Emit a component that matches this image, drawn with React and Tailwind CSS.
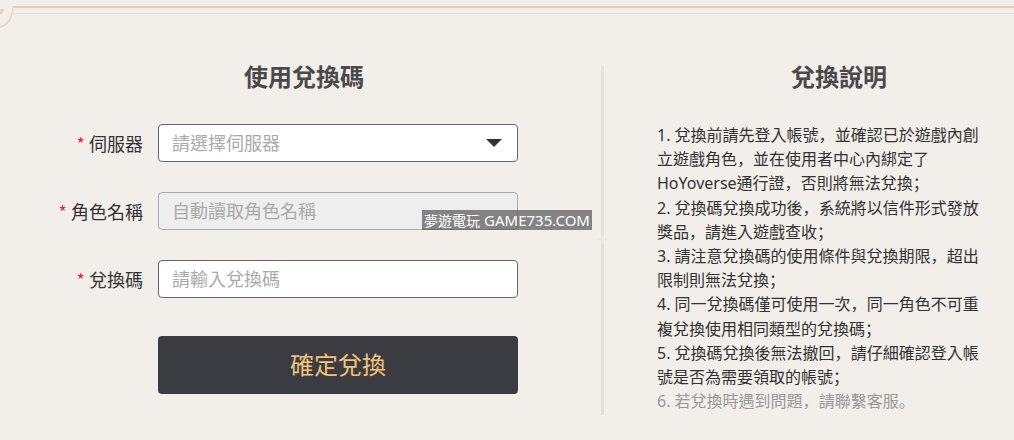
import React from "react";

const font = { fontFamily: '"Noto Sans", "Noto Sans CJK TC", sans-serif' };
const punctFont = { fontFamily: '"Noto Sans CJK SC", sans-serif' };

const notes = [
  "1. 兌換前請先登入帳號，並確認已於遊戲內創立遊戲角色，並在使用者中心內綁定了HoYoverse通行證，否則將無法兌換；",
  "2. 兌換碼兌換成功後，系統將以信件形式發放獎品，請進入遊戲查收；",
  "3. 請注意兌換碼的使用條件與兌換期限，超出限制則無法兌換；",
  "4. 同一兌換碼僅可使用一次，同一角色不可重複兌換使用相同類型的兌換碼；",
  "5. 兌換碼兌換後無法撤回，請仔細確認登入帳號是否為需要領取的帳號；",
];

// the reference sets its full-width punctuation low and to the left
const withPunct = (text) =>
  text.split(/([，；。])/).map((part, i) =>
    i % 2 ? (
      <span key={i} className="leading-[0]" style={punctFont}>
        {part}
      </span>
    ) : (
      part
    )
  );

const Row = ({ label, children }) => (
  <div className="flex items-center h-[38px] mb-[30px]">
    <label className="w-[143px] text-right text-[18px] text-[#333] leading-none">
      <span className="font-['Noto_Sans_CJK_TC'] text-[#f5222d] mr-[4px]">*</span>
      {label}
    </label>
    <div className="ml-[15px] w-[360px] h-full">{children}</div>
  </div>
);

const App = () => {
  return (
    <div
      className="relative w-[1014px] h-[440px] overflow-hidden bg-[#f2eeea]"
      style={font}
    >
      {/* top frame */}
      <div className="pt-[6px] pl-[13px]">
        <div className="h-[2px] bg-[#dfcfbf]" />
        <div className="h-[1px] mt-[5px] bg-[#e6dfd6]" />
      </div>
      <svg className="absolute left-0 top-0" width="16" height="30" viewBox="0 0 16 30" fill="none">
        <path d="M13 6 C13 15 9 25 0 27" stroke="#e3d5c6" strokeWidth="1.5" />
        <path d="M0 9 H4 C4 11 2 14 0 15 Z" fill="#e3d5c6" />
      </svg>

      <div className="flex">
        {/* form */}
        <div className="w-[601px] shrink-0">
          <h2 className="mt-[45px] w-[608px] text-center text-[24px] font-bold text-[#4a4a4a] leading-[36px]">
            使用兌換碼
          </h2>
          <div className="mt-[29px]">
            <Row label="伺服器">
              <div className="flex items-center justify-between h-full bg-white border border-[#666] rounded-[4px] pl-[13px] pr-[15px] text-[18px] text-[#aaa]">
                <span>請選擇伺服器</span>
                <span className="w-0 h-0 border-x-[8px] border-x-transparent border-t-[8px] border-t-[#333]" />
              </div>
            </Row>
            <Row label="角色名稱">
              <div className="flex items-center h-full bg-[#eeeeee] border border-[#aaa] rounded-[4px] pl-[13px] text-[18px] text-[#aaa]">
                自動讀取角色名稱
              </div>
            </Row>
            <Row label="兌換碼">
              <div className="flex items-center h-full bg-white border border-[#666] rounded-[4px] pl-[13px] text-[18px] text-[#aaa]">
                請輸入兌換碼
              </div>
            </Row>
            <button className="block ml-[158px] mt-[38px] w-[360px] h-[58px] bg-[#3b3c41] rounded-[4px] text-[24px] text-[#f0c27b]">
              確定兌換
            </button>
          </div>
        </div>

        {/* divider */}
        <div className="relative w-[3px] h-[349px] mt-[52px] bg-[#e5e1dc] shrink-0">
          <svg className="absolute left-[-4px] top-[167px]" width="11" height="13" viewBox="0 0 11 13">
            <path d="M5.5 0 L7 5 L11 6.5 L7 8 L5.5 13 L4 8 L0 6.5 L4 5 Z" fill="#ebe7e2" />
          </svg>
        </div>

        {/* notes */}
        <div className="ml-[54px] w-[324px]">
          <h2 className="mt-[45px] w-[364px] ml-[-1px] text-center text-[24px] font-bold text-[#4a4a4a] leading-[36px]">
            兌換說明
          </h2>
          <div className="mt-[28px] ml-[-1px] text-[16px] leading-[24.2px] text-[#333]">
            {notes.map((n) => (
              <p key={n}>{withPunct(n)}</p>
            ))}
            <p className="text-[#999]">{withPunct("6. 若兌換時遇到問題，請聯繫客服。")}</p>
          </div>
        </div>
      </div>

      {/* watermark */}
      <div className="absolute left-[422px] top-[210px] w-[170px] h-[20px] flex items-center justify-center gap-[4px] bg-[#555]/70 text-[14px] text-white whitespace-nowrap">
        <span>夢遊電玩</span>
        <span className="text-[15px]">GAME735.COM</span>
      </div>
    </div>
  );
};

export default App;
